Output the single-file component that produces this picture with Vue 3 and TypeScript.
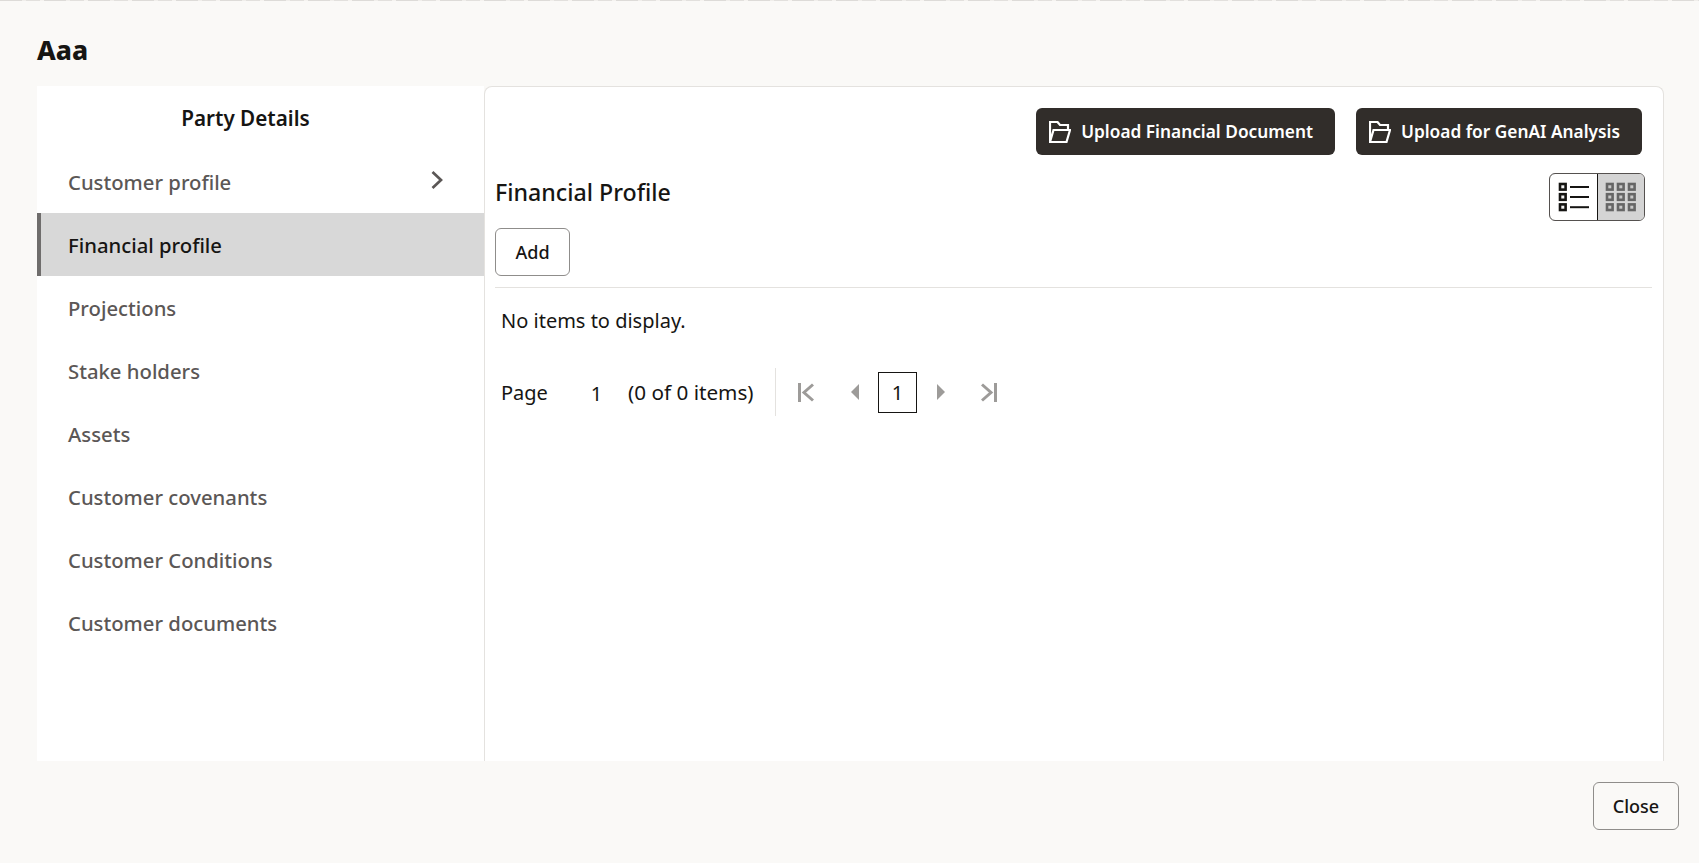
<script setup lang="ts">
const items: string[] = ['Customer profile', 'Financial profile', 'Projections', 'Stake holders', 'Assets', 'Customer covenants', 'Customer Conditions', 'Customer documents']
const active = 'Financial profile'
</script>

<template>
  <div class="page">
    <div class="strip"></div>
    <h1 class="title">Aaa</h1>
    <div class="body">
      <aside class="side">
        <div class="side-head">Party Details</div>
        <ul class="nav">
          <li v-for="(it, i) in items" :key="it" class="nav-item" :class="{ on: it === active }">
            <span>{{ it }}</span>
            <svg v-if="i === 0" class="chev" width="14" height="20" viewBox="0 0 14 20"><path d="M2.5 2 L11 10 L2.5 18" fill="none" stroke="#5b5756" stroke-width="2.7"/></svg>
          </li>
        </ul>
      </aside>
      <main class="main">
        <div class="actions">
          <button class="primary">
            <svg class="folder" width="22" height="22" viewBox="0 0 22 22"><path d="M1 21V1h7.5l2.5 3h8v5M1 21h16.5L21 9H4.5L1 21z" fill="none" stroke="#fff" stroke-width="2.2"/></svg>
            <span>Upload Financial Document</span>
          </button>
          <button class="primary">
            <svg class="folder" width="22" height="22" viewBox="0 0 22 22"><path d="M1 21V1h7.5l2.5 3h8v5M1 21h16.5L21 9H4.5L1 21z" fill="none" stroke="#fff" stroke-width="2.2"/></svg>
            <span>Upload for GenAI Analysis</span>
          </button>
        </div>
        <div class="head-row">
          <h2 class="h2">Financial Profile</h2>
          <div class="toggle">
            <div class="t-cell t-on">
              <svg width="32" height="32" viewBox="0 0 32 32">
                <g fill="#f2f2f2" stroke="#161513" stroke-width="2.6"><rect x="2" y="3" width="5.6" height="5.6"/><rect x="2" y="13.2" width="5.6" height="5.6"/><rect x="2" y="23.4" width="5.6" height="5.6"/></g>
                <g fill="#161513"><rect x="12" y="5" width="19" height="2"/><rect x="12" y="15" width="19" height="2"/><rect x="12" y="25.2" width="19" height="2"/></g>
              </svg>
            </div>
            <div class="t-cell t-off">
              <svg width="32" height="32" viewBox="0 0 32 32">
                <g fill="#c8c8c8" stroke="#666" stroke-width="2.6">
                  <template v-for="y in [3, 13.2, 23.4]" :key="y">
                    <rect v-for="x in [2, 13, 24]" :key="x" :x="x" :y="y" width="5.6" height="5.6"/>
                  </template>
                </g>
              </svg>
            </div>
          </div>
        </div>
        <button class="add">Add</button>
        <div class="sep"></div>
        <p class="empty">No items to display.</p>
        <div class="pager">
          <span class="p-label">Page</span>
          <span class="p-num">1</span>
          <span class="p-count">(0 of 0 items)</span>
          <span class="p-div"></span>
          <svg class="i-first" width="16" height="19" viewBox="0 0 16 19"><path d="M1.5 0v19" stroke="#9d9b99" stroke-width="3"/><path d="M15 1.5 L6 9.5 L15 17.5" fill="none" stroke="#9d9b99" stroke-width="3"/></svg>
          <svg class="i-prev" width="8" height="16" viewBox="0 0 8 16"><path d="M8 0v16L0 8z" fill="#9d9b99"/></svg>
          <span class="p-box">1</span>
          <svg class="i-next" width="8" height="16" viewBox="0 0 8 16"><path d="M0 0v16l8-8z" fill="#9d9b99"/></svg>
          <svg class="i-last" width="16" height="19" viewBox="0 0 16 19"><path d="M1 1.5 L10 9.5 L1 17.5" fill="none" stroke="#9d9b99" stroke-width="3"/><path d="M14.5 0v19" stroke="#9d9b99" stroke-width="3"/></svg>
        </div>
      </main>
    </div>
    <div class="foot"><button class="close">Close</button></div>
  </div>
</template>

<style>
html, body { margin: 0; background: #faf9f7; }
</style>

<style scoped>
* { box-sizing: border-box; }
.page {
  width: 1699px; height: 863px; background: #faf9f7; overflow: hidden;
  font-family: "Noto Sans", "Open Sans", sans-serif; color: #161513;
  display: flex; flex-direction: column; padding: 0 20px 0 37px;
}
.strip {
  height: 1px; margin: 0 -20px 0 -37px; flex: none;
  background: repeating-linear-gradient(90deg, #dddbd8 0 22px, #f0eeeb 22px 26px, #e2e0dd 26px 40px, #f5f3f0 40px 44px);
}
.title { margin: 0; height: 85px; padding-top: 31px; font-size: 26.5px; line-height: 36px; font-weight: 800; flex: none; }
.body { display: flex; height: 675px; flex: none; margin-right: 15px; }
.side { width: 447px; flex: none; background: #fff; }
.side-head { height: 64px; padding: 16px 0 0 0; text-align: center; font-size: 20.7px; line-height: 32px; font-weight: 600; width: 417px; }
.nav { list-style: none; margin: 0; padding: 0; }
.nav-item {
  height: 63.1px; display: flex; align-items: center; justify-content: space-between;
  padding: 0 40px 0 31px; font-size: 20.3px; color: #5b5756; font-weight: 500;
}
.nav-item.on { background: #d8d8d8; color: #161513; border-left: 4px solid #6f6d6c; padding-left: 27px; }
.chev { margin-top: -3px; flex: none; }
.main { flex: 1; min-width: 0; background: #fff; border: 1px solid #e4e2df; border-bottom: 0; border-radius: 8px 8px 0 0; padding: 21px 11px 0 10px; }
.actions { display: flex; justify-content: flex-end; gap: 21px; padding-right: 10px; }
.primary {
  height: 47px; border: 0; border-radius: 6px; background: #312d2a; color: #fff;
  font: 600 17.3px "Noto Sans", sans-serif; display: flex; align-items: center; gap: 10px;
  padding: 0 22px 0 13px; white-space: nowrap;
}
.folder { flex: none; }
.head-row { display: flex; justify-content: space-between; align-items: flex-start; padding-right: 7px; height: 55px; margin-top: 18px; }
.h2 { margin: 0; padding-top: 1px; font-size: 23.2px; line-height: 36px; font-weight: 500; }
.toggle { display: flex; width: 96px; height: 48px; border: 1px solid #55514f; border-radius: 6px; overflow: hidden; }
.t-cell { display: flex; align-items: center; justify-content: center; }
.t-on { border: 1px solid #161513; border-radius: 6px 0 0 6px; background: #fff; margin: -1px 0 -1px -1px; height: 48px; width: 49px; }
.t-off { flex: 1; background: #d4d4d4; }
.add, .close {
  height: 48px; background: transparent; border: 1px solid #8f8d8b; border-radius: 6px;
  font: 500 18px "Noto Sans", sans-serif; color: #161513; display: block;
}
.add { width: 75px; }
.close { width: 86px; }
.sep { height: 1px; background: #e4e2df; margin-top: 11px; }
.empty { margin: 19px 0 0 6px; font-size: 20px; line-height: 28px; }
.pager { display: flex; align-items: center; height: 48px; margin-top: 33px; font-size: 20px; }
.p-label { margin-left: 6px; width: 72px; flex: none; }
.p-num { width: 47px; text-align: center; padding-top: 3px; flex: none; }
.p-count { margin-left: 8px; width: 147px; font-size: 20.7px; flex: none; white-space: nowrap; }
.p-div { width: 1px; height: 48px; background: #e4e2df; flex: none; }
.pager svg { flex: none; }
.i-first { margin-left: 22px; }
.i-prev { margin-left: 37px; }
.p-box { width: 39px; height: 41px; margin-left: 19px; border: 1px solid #161513; display: flex; align-items: center; justify-content: center; flex: none; }
.i-next { margin-left: 20px; }
.i-last { margin-left: 36px; }
.foot { flex: 1; display: flex; justify-content: flex-end; padding-top: 21px; }
</style>
